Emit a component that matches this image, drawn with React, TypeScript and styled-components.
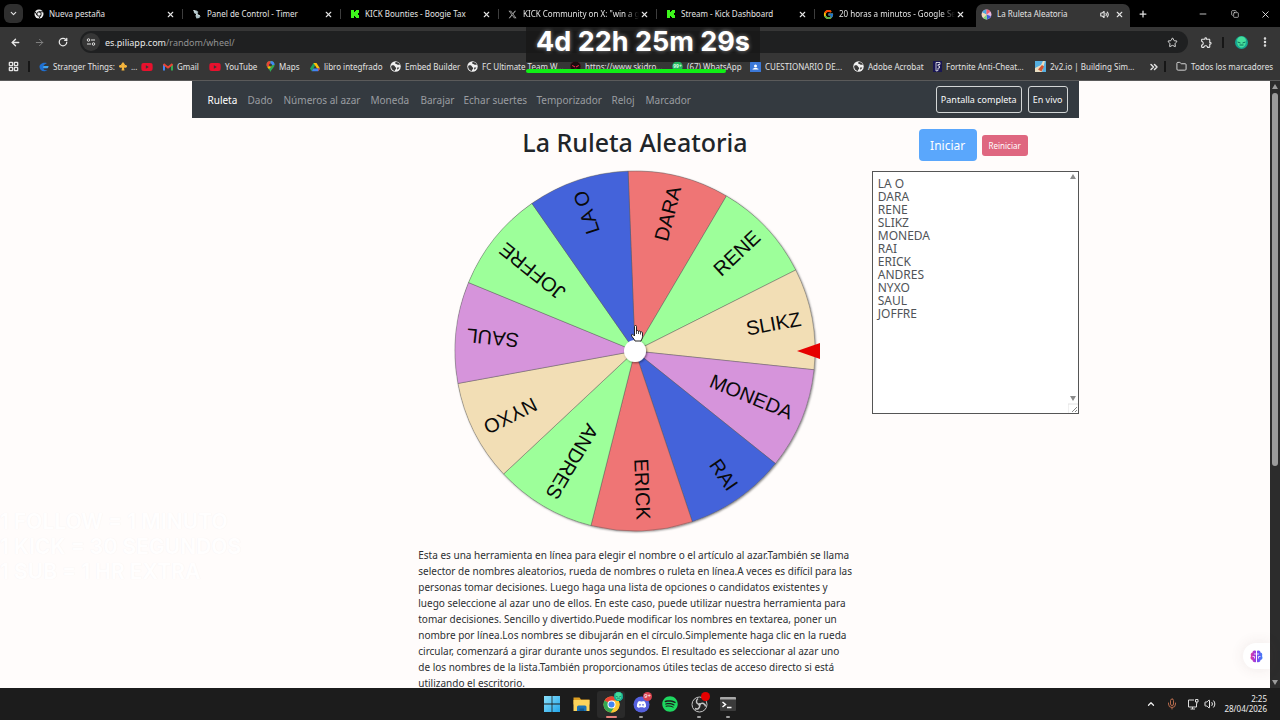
import React from "react";
import styled, { createGlobalStyle } from "styled-components";
import {
  ArrowLeft, ArrowRight, RotateCw, Star, Volume2, Plus, Minus, X, Copy,
  ChevronDown, ChevronUp, ChevronsRight, Folder, EllipsisVertical, Mic, LayoutGrid,
} from "lucide-react";
import { FcGoogle } from "react-icons/fc";
import { FaDiscord, FaSpotify, FaXTwitter, FaYoutube } from "react-icons/fa6";
import { MdOutlineExtension } from "react-icons/md";

const Global = createGlobalStyle`
  *, *::before, *::after { box-sizing: border-box; }
  html, body { margin: 0; height: 100%; overflow: hidden; }
  #root { height: 100%; }
  body { font-family: "Noto Sans", "Open Sans", sans-serif; background: #fffcfb; color: #212529; }
  button, textarea, input { font-family: inherit; }
  button { border: 0; padding: 0; background: none; color: inherit; }
  svg { display: block; flex: none; }
`;

/* ---------- browser frame ---------- */

const Screen = styled.div`
  display: flex;
  flex-direction: column;
  height: 100vh;
  position: relative;
`;

const TabStrip = styled.div`
  display: flex;
  height: 27px;
  padding-left: 4px;
  background: #000;
  color: #e4e4e4;
`;

const TabSearch = styled.button`
  display: grid;
  place-items: center;
  width: 19px;
  height: 19px;
  margin: 4px 2px 0 0;
  border-radius: 6px;
  background: #2f2f2f;
`;

const Tab = styled.div<{ $active?: boolean; $divider?: boolean }>`
  display: flex;
  align-items: center;
  gap: 5px;
  flex: 0 1 ${(p) => (p.$active ? 154 : 158)}px;
  min-width: 0;
  height: ${(p) => (p.$active ? "23px" : "20px")};
  margin-top: 4px;
  margin-left: ${(p) => (p.$active ? 3 : 0)}px;
  padding: ${(p) => (p.$active ? "0 6px 3px 5px" : "0 8px 0 8px")};
  border-radius: 7px 7px 0 0;
  background: ${(p) => (p.$active ? "#363636" : "transparent")};
  position: relative;
  &::after {
    content: "";
    display: ${(p) => (p.$divider ? "block" : "none")};
    position: absolute;
    right: 0;
    top: 5px;
    width: 1px;
    height: 10px;
    background: #3d3d3d;
  }
`;

const TabIcon = styled.span`
  display: grid;
  place-items: center;
  flex: none;
  width: 11px;
`;

const TabTitle = styled.span<{ $fade?: boolean }>`
  flex: 1;
  min-width: 0;
  margin-right: -5px;
  overflow: hidden;
  white-space: nowrap;
  font-size: 8px;
  line-height: 12px;
  ${(p) => p.$fade && "mask-image: linear-gradient(90deg, #000 88%, transparent);"}
`;

const IconButton = styled.button<{ $w?: number }>`
  display: grid;
  place-items: center;
  flex: none;
  width: ${(p) => p.$w ?? 16}px;
  height: 20px;
`;

const NewTab = styled(IconButton)`
  margin: 4px 0 0 3px;
`;

const CloseButton = styled.button`
  display: grid;
  place-items: center;
  flex: none;
  width: 10px;
  height: 10px;
`;

const WindowControls = styled.div`
  display: flex;
  margin-left: auto;
  padding-top: 4px;
`;

const Toolbar = styled.div`
  display: flex;
  align-items: center;
  height: 27px;
  padding: 3px 8px 0 3px;
  background: #363636;
  color: #e8e8e8;
`;

const Address = styled.div`
  display: flex;
  align-items: center;
  flex: 1;
  height: 22px;
  margin: 0 2px 0 5px;
  padding: 0 10px 0 2px;
  border-radius: 11px;
  background: #1f2021;
`;

const SiteInfo = styled.button`
  display: grid;
  place-items: center;
  width: 18px;
  height: 18px;
  border-radius: 9px;
  background: #363636;
`;

const UrlText = styled.span`
  flex: 1;
  margin-left: 5px;
  font-size: 9px;
  color: #e8e8e8;
  span { color: #929292; }
`;

const ToolDivider = styled.span`
  width: 2px;
  height: 11px;
  background: #161616;
`;

const BookmarkBar = styled.nav`
  display: flex;
  align-items: center;
  height: 27px;
  padding: 0 7px 1px 8px;
  border-bottom: 1px solid #5a5a5a;
  background: #363636;
  color: #e2e2e2;
`;

const Bookmark = styled.a<{ $w: number }>`
  display: flex;
  align-items: center;
  gap: 4px;
  flex: 0 0 ${(p) => p.$w}px;
  font-size: 8px;
  line-height: 12px;
  white-space: nowrap;
  color: inherit;
  text-decoration: none;
`;

const AllBookmarks = styled(Bookmark)`
  margin-left: 10px;
`;

const Spacer = styled.span`
  flex: 1;
`;

/* ---------- stream overlays ---------- */

const Countdown = styled.div`
  position: absolute;
  top: 27px;
  left: 50%;
  width: 234px;
  height: 46px;
  margin-left: -114px;
  z-index: 2;
`;

const CountdownText = styled.div`
  height: 35px;
  padding-left: 10px;
  background: rgba(24, 24, 24, 0.8);
  color: #fff;
  font: 700 27px/29px Inter, sans-serif;
  white-space: nowrap;
  text-shadow: 0 0 4px rgba(255, 255, 255, 0.5);
`;

const CountdownBar = styled.div`
  width: 200px;
  height: 4px;
  margin-top: 7px;
  border-radius: 2px;
  background: #10f015;
`;

const StreamRules = styled.div`
  position: absolute;
  left: 0;
  top: 509px;
  color: #fffefe;
  font: 700 21px/25px Inter, sans-serif;
  white-space: pre;
  text-shadow: 0 0 1px #f3efef;
`;

/* ---------- web page ---------- */

const Viewport = styled.div`
  display: flex;
  flex: 1;
  min-height: 0;
`;

const Page = styled.div`
  flex: 1;
  min-width: 0;
  overflow: hidden;
  background: #fffcfb;
`;

const Container = styled.div`
  max-width: 887px;
  margin: 0 auto;
`;

const NavBar = styled.nav`
  display: flex;
  align-items: center;
  gap: 11px;
  height: 37px;
  padding: 0 11px 0 16px;
  background: #343a40;
`;

const NavLink = styled.a<{ $active?: boolean; $w: number }>`
  width: ${(p) => p.$w}px;
  font-size: 10px;
  white-space: nowrap;
  color: ${(p) => (p.$active ? "#fff" : "#9a9da0")};
  text-decoration: none;
`;

const NavButtons = styled.div`
  display: flex;
  gap: 6px;
  margin-left: auto;
`;

const OutlineButton = styled.button`
  height: 27px;
  padding: 0 4px;
  border: 1px solid #d3d6d6;
  border-radius: 3px;
  color: #f8f9fa;
  font-size: 9px;
`;

const Columns = styled.main`
  display: grid;
  grid-template-columns: 1fr 2fr 1fr;
`;

const Center = styled.section`
  grid-column: 2;
  display: flex;
  flex-direction: column;
  align-items: center;
`;

const Title = styled.h1`
  margin: 8px 0 0;
  font-size: 25px;
  line-height: 33px;
  font-weight: 500;
  white-space: nowrap;
`;

const WheelSvg = styled.svg`
  width: 374px;
  height: 370px;
  margin-top: 8px;
`;

const About = styled.p`
  align-self: stretch;
  margin: 10px 0 0;
  padding-left: 5px;
  color: #2c2f32;
  font-size: 10px;
  line-height: 16px;
  white-space: nowrap;
`;

const Side = styled.section`
  display: flex;
  flex-direction: column;
  padding: 11px 0 0 15px;
`;

const Actions = styled.div`
  display: flex;
  align-items: center;
  justify-content: center;
  gap: 5px;
  height: 32px;
  margin-right: 4px;
`;

const ActionButton = styled.button<{ $large?: boolean }>`
  width: ${(p) => (p.$large ? 58 : 46)}px;
  height: ${(p) => (p.$large ? 32 : 21)}px;
  border-radius: ${(p) => (p.$large ? 4 : 3)}px;
  background: ${(p) => (p.$large ? "#5aa7fc" : "#df6780")};
  color: #fff;
  font-size: ${(p) => (p.$large ? 12 : 8)}px;
`;

const NamesBox = styled.div`
  position: relative;
  margin-top: 10px;
`;

const Names = styled.textarea`
  display: block;
  width: 100%;
  height: 243px;
  padding: 5px;
  border: 1px solid #555;
  border-radius: 0;
  outline: 0;
  resize: none;
  overflow: hidden;
  background: #fff;
  color: #505458;
  font-size: 12px;
  line-height: 13px;
`;

const NamesRail = styled.div`
  position: absolute;
  top: 3px;
  right: 1px;
  bottom: 1px;
  width: 10px;
  display: flex;
  flex-direction: column;
  align-items: center;
`;

const ScrollRail = styled.div`
  display: flex;
  flex-direction: column;
  align-items: center;
  width: 10px;
  padding: 3px 0;
  background: #2c2c2c;
`;

const Thumb = styled.div`
  width: 6px;
  height: 62%;
  margin-top: 4px;
  border-radius: 3px;
  background: #9b9b9b;
`;

const Assistant = styled.button`
  position: absolute;
  right: 10px;
  top: 643px;
  display: flex;
  align-items: center;
  width: 27px;
  height: 26px;
  padding-left: 7px;
  border-radius: 13px 0 0 13px;
  background: #fff;
  box-shadow: 0 0 14px rgba(90, 60, 60, 0.1);
`;

const Hand = styled.svg`
  position: absolute;
  left: 50%;
  top: 325px;
  margin-left: -9px;
`;

/* ---------- taskbar ---------- */

const Taskbar = styled.footer`
  display: grid;
  grid-template-columns: 1fr auto 1fr;
  align-items: center;
  height: 32px;
  background: #1c1c1c;
  color: #eee;
`;

const Dock = styled.div`
  display: flex;
  grid-column: 2;
  gap: 3px;
`;

const DockItem = styled.button<{ $active?: boolean; $running?: boolean }>`
  position: relative;
  display: grid;
  place-items: center;
  width: ${(p) => (p.$active ? 28 : 26)}px;
  height: 27px;
  border-radius: 3px;
  background: ${(p) => (p.$active ? "#2a2a2a" : "transparent")};
  &::after {
    content: "";
    display: ${(p) => (p.$active || p.$running ? "block" : "none")};
    position: absolute;
    bottom: 0;
    width: ${(p) => (p.$active ? 11 : 4)}px;
    height: 2px;
    border-radius: 1px;
    background: ${(p) => (p.$active ? "#e8837c" : "#a0a0a0")};
  }
`;

const Badge = styled.span<{ $color: string }>`
  position: absolute;
  top: 1px;
  right: 2px;
  width: 9px;
  height: 9px;
  border-radius: 5px;
  background: ${(p) => p.$color};
  color: #fff;
  font-size: 6px;
  line-height: 9px;
`;

const Tray = styled.div`
  display: flex;
  align-items: center;
  justify-content: flex-end;
  padding-right: 13px;
`;

const Clock = styled.time`
  width: 45px;
  margin-left: 6px;
  font-size: 8px;
  line-height: 10px;
  text-align: right;
  white-space: nowrap;
`;

/* ---------- small drawings ---------- */

const ChromeMono = () => (
  <svg width="10" height="10" viewBox="0 0 20 20">
    <circle cx="10" cy="10" r="9" fill="#eee" />
    <circle cx="10" cy="10" r="4.4" fill="#eee" stroke="#000" strokeWidth="1.8" />
    <path d="M10 5.6H18M6.2 12.2L2.2 5.6M13.8 12.2L9.8 19" stroke="#000" strokeWidth="1.8" />
  </svg>
);

const TimerMark = () => (
  <svg width="10" height="10" viewBox="0 0 20 20">
    <path d="M3 2l6 1 4 3-3 3 6 4-1 5-6 1-2-5 2-3-5-3z" fill="#a9bfc4" />
    <path d="M3 2l5 5M11 9l-3 4M13 12l3 3" stroke="#eaf4f4" strokeWidth="2" />
  </svg>
);

const KickMark = () => (
  <svg width="10" height="10" viewBox="0 0 10 10">
    <path fill="#3df51c" d="M1 1h3v2h1V2h1V1h3v3H8v1H7h1v1h1v3H6V8H5V7H4v2H1z" />
  </svg>
);

const PieMark = () => (
  <svg width="11" height="11" viewBox="0 0 20 20">
    <circle cx="10" cy="10" r="9" fill="#e9b9e0" />
    <path d="M10 10L2 6A9 9 0 0 1 10 1z" fill="#4ba9dc" />
    <path d="M10 10V1a9 9 0 0 1 7 4z" fill="#ef5f6c" />
    <path d="M10 10l8 3a9 9 0 0 1-7 6z" fill="#3f5bd8" />
    <path d="M10 10l1 9a9 9 0 0 1-7-3z" fill="#7ed67b" />
    <path d="M10 10l-6 6a9 9 0 0 1-2-9z" fill="#f3dfb3" />
  </svg>
);

const CrescentMark = () => (
  <svg width="10" height="10" viewBox="0 0 20 20">
    <path d="M16 2C8 0 1 4 1 10s7 11 16 7c-5 0-8-2-8-4h8l2-5H9c1-3 4-4 7-6z" fill="#1f6fd0" />
    <path d="M9 8h10l-1 4H8z" fill="#43a5ee" />
  </svg>
);

const Ornament = () => (
  <svg width="8" height="9" viewBox="0 0 16 18">
    <path d="M8 0l4 5-1 2c3-2 5 0 5 2s-2 3-5 2l-1 1 1 5H5l1-5-1-1c-3 1-5 0-5-2s2-4 5-2L4 5z" fill="#f5b53c" />
  </svg>
);

const GmailMark = () => (
  <svg width="10" height="10" viewBox="0 0 20 20">
    <path d="M2 17V5" stroke="#4285f4" strokeWidth="4" />
    <path d="M18 17V5" stroke="#34a853" strokeWidth="4" />
    <path d="M1 4l9 7 9-7" fill="none" stroke="#ea4335" strokeWidth="4" />
  </svg>
);

const MapsMark = () => (
  <svg width="9" height="11" viewBox="0 0 18 22">
    <path d="M9 22C7 16 1 13 1 8a8 8 0 0 1 16 0c0 5-6 8-8 14z" fill="#34a853" />
    <path d="M1 8a8 8 0 0 1 8-8v8L3 13z" fill="#ea4335" />
    <path d="M9 0a8 8 0 0 1 8 8H9z" fill="#4285f4" />
    <path d="M3 13l5-5 3 3-5 5z" fill="#fbbc04" />
    <circle cx="9" cy="8" r="3" fill="#363636" />
  </svg>
);

const DriveMark = () => (
  <svg width="10" height="10" viewBox="0 0 20 18">
    <path d="M7 1h6L6.500 12.500 3.500 17.500 0 12z" fill="#1ea362" />
    <path d="M7 1h6l7 11h-6z" fill="#ffc107" />
    <path d="M6.500 12H20l-3.500 5.500h-13z" fill="#4285f4" />
    <path d="M16 12h4l-3.500 5.500z" fill="#ea4335" />
  </svg>
);

const GlobeMark = () => (
  <svg width="11" height="11" viewBox="0 0 20 20">
    <circle cx="10" cy="10" r="9.500" fill="#f1f1f1" />
    <path d="M3 8c3-1 5 0 6 2s3 2 2 4-2 1-2 4c-4 0-7-4-7-8zM9 3c1 3 3 2 5 4l4 0c-1-3-4-5-7-5zM13 12l4 0c-1 2-2 3-4 4z" fill="#3a3a3a" />
  </svg>
);

const SkullMark = () => (
  <svg width="11" height="11" viewBox="0 0 20 20">
    <circle cx="10" cy="10" r="9.500" fill="#1a0b0e" stroke="#571925" />
    <path d="M4 8l5 3M16 8l-5 3M8 15h4" stroke="#df2843" strokeWidth="2" />
  </svg>
);

const WhatsAppMark = () => (
  <svg width="11" height="11" viewBox="0 0 22 22">
    <circle cx="11" cy="11" r="10.500" fill="#25b45e" />
    <text x="11" y="14" textAnchor="middle" fontSize="10" fontWeight="700" fill="#d9ffe6">99+</text>
  </svg>
);

const ClassMark = () => (
  <svg width="11" height="10" viewBox="0 0 22 20">
    <rect width="22" height="20" rx="1" fill="#3b78d8" />
    <circle cx="11" cy="8" r="3" fill="#fff" />
    <path d="M5 15c0-4 12-4 12 0z" fill="#fff" />
  </svg>
);

const FortMark = () => (
  <svg width="9" height="11" viewBox="0 0 18 22">
    <rect width="18" height="22" fill="#191653" />
    <path d="M6 3h8v4h-4v3h3v4h-3v5l-4 1z" fill="none" stroke="#fff" strokeWidth="1.500" />
  </svg>
);

const GameMark = () => (
  <svg width="11" height="11" viewBox="0 0 22 22">
    <rect width="22" height="22" fill="#55aee0" />
    <path d="M0 22V14L12 8l4-8h4l-6 22z" fill="#e9ddc0" />
    <path d="M6 17l8-9 4 3-5 10z" fill="#d4552e" />
  </svg>
);

const Avatar = ({ size = 13 }: { size?: number }) => (
  <svg width={size} height={size} viewBox="0 0 26 26">
    <circle cx="13" cy="13" r="13" fill="#16a793" />
    <path d="M4 10a9 9 0 0 1 18 0c0 8-4 13-9 13S4 18 4 10z" fill="#45df9b" />
    <path d="M5 12l6 2M21 12l-6 2M9 18h8" stroke="#0d6c5c" strokeWidth="2" />
  </svg>
);

const TuneIcon = () => (
  <svg width="10" height="10" viewBox="0 0 20 20" fill="none" stroke="#e4e4e4" strokeWidth="2">
    <circle cx="5" cy="6" r="2.500" />
    <path d="M10 6h8M2 14h8" />
    <circle cx="15" cy="14" r="2.500" />
  </svg>
);

const Arrow = ({ down, color }: { down?: boolean; color: string }) => (
  <svg width="6" height="5" viewBox="0 0 6 5">
    <path d={down ? "M0 0h6L3 5z" : "M0 5h6L3 0z"} fill={color} />
  </svg>
);

const WindowsMark = () => (
  <svg width="16" height="16" viewBox="0 0 16 16">
    <defs>
      <linearGradient id="win" x1="0" y1="0" x2="1" y2="1">
        <stop offset="0" stopColor="#8be0fb" />
        <stop offset="1" stopColor="#22a6ea" />
      </linearGradient>
    </defs>
    <path d="M0 0h7.600v7.600H0zM8.400 0H16v7.600H8.400zM0 8.400h7.600V16H0zM8.400 8.400H16V16H8.400z" fill="url(#win)" />
  </svg>
);

const ExplorerMark = () => (
  <svg width="17" height="16" viewBox="0 0 34 32">
    <path d="M1 3h12l3 4h17v10H1z" fill="#dd9f22" />
    <path d="M1 8h32v22H1z" fill="#fbd45c" />
    <path d="M8 30V22a3 3 0 0 1 3-3h13a3 3 0 0 1 3 3v8z" fill="#1b72b4" />
    <path d="M13 25h9v5h-9z" fill="#0f5a94" />
  </svg>
);

const ChromeMark = () => (
  <svg width="17" height="17" viewBox="0 0 34 34">
    <circle cx="17" cy="17" r="16" fill="#fcc934" />
    <path d="M17 17L3.100 9A16 16 0 0 1 30.900 9z" fill="#ea4335" />
    <path d="M17 17L3.100 9A16 16 0 0 0 16 33L24 20z" fill="#34a853" />
    <path d="M17 9h13.900A16 16 0 0 1 16 33l8-12z" fill="#fcc934" />
    <circle cx="17" cy="17" r="8" fill="#fff" />
    <circle cx="17" cy="17" r="6" fill="#4285f4" />
  </svg>
);

const DiscordMark = () => (
  <svg width="17" height="17" viewBox="0 0 34 34">
    <circle cx="17" cy="17" r="16" fill="#5560dd" />
    <g transform="translate(7 7)"><FaDiscord size={20} color="#fff" /></g>
  </svg>
);

const ObsMark = () => (
  <svg width="17" height="17" viewBox="0 0 34 34" fill="none" stroke="#c6c6c6" strokeWidth="2">
    <circle cx="17" cy="17" r="15" fill="#252525" />
    <path d="M17 17c-7-1-8-8-3-12M17 17c5-5 12-2 12 4M17 17c2 7-4 11-9 8" strokeWidth="3" />
    <circle cx="17" cy="17" r="2" fill="#c6c6c6" />
  </svg>
);

const TerminalMark = () => (
  <svg width="16" height="14" viewBox="0 0 32 28">
    <rect width="32" height="28" rx="2" fill="#3b3b3b" />
    <path d="M0 2a2 2 0 0 1 2-2h28a2 2 0 0 1 2 2v3H0z" fill="#a8a8a8" />
    <path d="M5 10l6 5-6 5M14 21h9" fill="none" stroke="#fff" strokeWidth="3" />
  </svg>
);

const NetworkIcon = () => (
  <svg width="12" height="12" viewBox="0 0 24 24" fill="none" stroke="#ddd" strokeWidth="2">
    <path d="M14 4H3v14h16v-7M7 22h9M11 18v4" />
    <path d="M17 3h5v5h-5zM19.500 8v4" />
  </svg>
);

const BrainMark = () => (
  <svg width="13" height="13" viewBox="0 0 26 26">
    <defs>
      <linearGradient id="brain" x1="0" x2="1">
        <stop offset="0" stopColor="#e13ba0" />
        <stop offset=".5" stopColor="#8a3df0" />
        <stop offset="1" stopColor="#3b82f6" />
      </linearGradient>
    </defs>
    <path d="M12 2C8 0 5 2 5 5 1 6 1 10 2 12c-2 3-1 7 3 8 0 4 4 5 7 4zM14 2c4-2 7 0 7 3 4 1 4 5 3 7 2 3 1 7-3 8 0 4-4 5-7 4z" fill="url(#brain)" />
    <path d="M12 8H8M5 13h4v4M14 8h4M21 13h-4v4" fill="none" stroke="#fff" strokeWidth="1.500" />
  </svg>
);

/* ---------- wheel ---------- */

const RED = "#ef7575";
const GREEN = "#9dff9a";
const WHEAT = "#f2deb5";
const PLUM = "#d694db";
const BLUE = "#4463da";

const slices = [
  { name: "DARA", color: RED },
  { name: "RENE", color: GREEN },
  { name: "SLIKZ", color: WHEAT },
  { name: "MONEDA", color: PLUM },
  { name: "RAI", color: BLUE },
  { name: "ERICK", color: RED },
  { name: "ANDRES", color: GREEN },
  { name: "NYXO", color: WHEAT },
  { name: "SAUL", color: PLUM },
  { name: "JOFFRE", color: GREEN },
  { name: "LA O", color: BLUE },
];

const START = -92.2;
const STEP = 360 / slices.length;
const R = 180;
const point = (deg: number) => {
  const a = (deg * Math.PI) / 180;
  return `${(R * Math.cos(a)).toFixed(2)} ${(R * Math.sin(a)).toFixed(2)}`;
};

const Wheel = () => (
  <WheelSvg viewBox="-187 -184 374 370" role="img" aria-label="Ruleta">
    <defs>
      <filter id="soft" x="-10%" y="-10%" width="120%" height="120%">
        <feDropShadow dx="1" dy="1" stdDeviation="1" floodOpacity=".5" />
      </filter>
    </defs>
    <circle r={R} fill="#888" filter="url(#soft)" />
    {slices.map((s, i) => {
      const from = START + i * STEP;
      return (
        <path
          key={s.name}
          d={`M0 0L${point(from)}A${R} ${R} 0 0 1 ${point(from + STEP)}Z`}
          fill={s.color}
          stroke="#555"
          strokeWidth=".4"
        />
      );
    })}
    {slices.map((s, i) => (
      <text
        key={s.name}
        x="169"
        y="5"
        textAnchor="end"
        fontFamily="Liberation Sans, Arial, sans-serif"
        fontSize="20"
        fill="#0a0a0a"
        transform={`rotate(${START + (i + 0.5) * STEP})`}
      >
        {s.name}
      </text>
    ))}
    <circle r="11" fill="#fff" filter="url(#soft)" />
    <path d="M162 0L185 -8V8Z" fill="#e60000" />
  </WheelSvg>
);

/* ---------- data ---------- */

const tabs = [
  { icon: <ChromeMono />, title: "Nueva pestaña" },
  { icon: <TimerMark />, title: "Panel de Control - Timer" },
  { icon: <KickMark />, title: "KICK Bounties - Boogie Tax" },
  { icon: <FaXTwitter size={9} color="#aaa" />, title: "KICK Community on X: \"win a g", fade: true },
  { icon: <KickMark />, title: "Stream - Kick Dashboard" },
  { icon: <FcGoogle size={11} />, title: "20 horas a minutos - Google Se", fade: true },
];

const bookmarks = [
  { icon: <CrescentMark />, text: "Stranger Things:", tail: true, w: 102 },
  { icon: <FaYoutube size={12} color="#e8112d" />, text: "", w: 22 },
  { icon: <GmailMark />, text: "Gmail", w: 46 },
  { icon: <FaYoutube size={12} color="#e8112d" />, text: "YouTube", w: 57 },
  { icon: <MapsMark />, text: "Maps", w: 44 },
  { icon: <DriveMark />, text: "libro integfrado", w: 80 },
  { icon: <GlobeMark />, text: "Embed Builder", w: 77 },
  { icon: <GlobeMark />, text: "FC Ultimate Team W...", w: 103 },
  { icon: <SkullMark />, text: "https://www.skidro...", w: 102 },
  { icon: <WhatsAppMark />, text: "(67) WhatsApp", w: 78 },
  { icon: <ClassMark />, text: "CUESTIONARIO DE...", w: 103 },
  { icon: <GlobeMark />, text: "Adobe Acrobat", w: 80 },
  { icon: <FortMark />, text: "Fortnite Anti-Cheat...", w: 102 },
  { icon: <GameMark />, text: "2v2.io | Building Sim...", w: 108 },
];

const navLinks: [string, number][] = [
  ["Ruleta", 29], ["Dado", 25], ["Números al azar", 76], ["Moneda", 39], ["Barajar", 32],
  ["Echar suertes", 62], ["Temporizador", 64], ["Reloj", 23], ["Marcador", 45],
];

const about = [
  "Esta es una herramienta en línea para elegir el nombre o el artículo al azar.También se llama",
  "selector de nombres aleatorios, rueda de nombres o ruleta en línea.A veces es difícil para las",
  "personas tomar decisiones. Luego haga una lista de opciones o candidatos existentes y",
  "luego seleccione al azar uno de ellos. En este caso, puede utilizar nuestra herramienta para",
  "tomar decisiones. Sencillo y divertido.Puede modificar los nombres en textarea, poner un",
  "nombre por línea.Los nombres se dibujarán en el círculo.Simplemente haga clic en la rueda",
  "circular, comenzará a girar durante unos segundos. El resultado es seleccionar al azar uno",
  "de los nombres de la lista.También proporcionamos útiles teclas de acceso directo si está",
  "utilizando el escritorio.",
];

const names = "LA O\nDARA\nRENE\nSLIKZ\nMONEDA\nRAI\nERICK\nANDRES\nNYXO\nSAUL\nJOFFRE";

export default function App() {
  return (
    <Screen>
      <Global />
      <TabStrip>
        <TabSearch aria-label="Buscar pestañas"><ChevronDown size={9} strokeWidth={3} /></TabSearch>
        {tabs.map((t, i) => (
          <Tab key={t.title} $divider={i < tabs.length - 1}>
            <TabIcon>{t.icon}</TabIcon>
            <TabTitle $fade={t.fade}>{t.title}</TabTitle>
            <CloseButton aria-label="Cerrar"><X size={9} strokeWidth={3} /></CloseButton>
          </Tab>
        ))}
        <Tab $active>
          <TabIcon><PieMark /></TabIcon>
          <TabTitle>La Ruleta Aleatoria</TabTitle>
          <Volume2 size={9} strokeWidth={3} />
          <CloseButton aria-label="Cerrar"><X size={9} strokeWidth={3} /></CloseButton>
        </Tab>
        <NewTab $w={20} aria-label="Nueva pestaña"><Plus size={10} strokeWidth={3} /></NewTab>
        <WindowControls>
          <IconButton $w={32} aria-label="Minimizar"><Minus size={10} /></IconButton>
          <IconButton $w={31} aria-label="Restaurar"><Copy size={8} /></IconButton>
          <IconButton $w={30} aria-label="Cerrar ventana"><X size={11} /></IconButton>
        </WindowControls>
      </TabStrip>
      <Toolbar>
        <IconButton $w={24} aria-label="Atrás"><ArrowLeft size={11} strokeWidth={3} /></IconButton>
        <IconButton $w={24} aria-label="Adelante"><ArrowRight size={11} color="#858585" /></IconButton>
        <IconButton $w={24} aria-label="Recargar"><RotateCw size={10} strokeWidth={3} /></IconButton>
        <Address>
          <SiteInfo aria-label="Información del sitio"><TuneIcon /></SiteInfo>
          <UrlText>es.piliapp.com<span>/random/wheel/</span></UrlText>
          <Star size={11} />
        </Address>
        <IconButton $w={32} aria-label="Extensiones"><MdOutlineExtension size={13} /></IconButton>
        <ToolDivider />
        <IconButton $w={34} aria-label="Perfil"><Avatar /></IconButton>
        <IconButton $w={14} aria-label="Menú"><EllipsisVertical size={12} strokeWidth={3} /></IconButton>
      </Toolbar>
      <BookmarkBar>
        <Bookmark href="#" $w={20} aria-label="Aplicaciones"><LayoutGrid size={11} strokeWidth={3} /></Bookmark>
        <Bookmark as="span" $w={11}><ToolDivider /></Bookmark>
        {bookmarks.map((b, i) => (
          <Bookmark key={i} href="#" $w={b.w}>
            {b.icon}
            {b.text && <span>{b.text}</span>}
            {b.tail && <><Ornament /><span>...</span></>}
          </Bookmark>
        ))}
        <Spacer />
        <ChevronsRight size={12} strokeWidth={3} />
        <Spacer />
        <ToolDivider />
        <AllBookmarks href="#" $w={94}><Folder size={11} />Todos los marcadores</AllBookmarks>
      </BookmarkBar>

      <Viewport>
        <Page>
          <Container>
            <NavBar>
              {navLinks.map(([label, w], i) => (
                <NavLink key={label} href="#" $active={i === 0} $w={w}>{label}</NavLink>
              ))}
              <NavButtons>
                <OutlineButton>Pantalla completa</OutlineButton>
                <OutlineButton>En vivo</OutlineButton>
              </NavButtons>
            </NavBar>
            <Columns>
              <Center>
                <Title>La Ruleta Aleatoria</Title>
                <Wheel />
                <About>
                  {about.map((line) => (
                    <React.Fragment key={line}>{line}<br /></React.Fragment>
                  ))}
                </About>
              </Center>
              <Side>
                <Actions>
                  <ActionButton $large>Iniciar</ActionButton>
                  <ActionButton>Reiniciar</ActionButton>
                </Actions>
                <NamesBox>
                  <Names aria-label="Nombres" defaultValue={names} spellCheck={false} />
                  <NamesRail>
                    <Arrow color="#8b8b8b" />
                    <Spacer />
                    <Arrow down color="#8b8b8b" />
                    <svg width="10" height="12" viewBox="0 0 10 12">
                      <path d="M0 12V3H10" fill="none" stroke="#e2e2e2" />
                      <path d="M4 11l5-5M7 11l2-2" stroke="#888" />
                    </svg>
                  </NamesRail>
                </NamesBox>
              </Side>
            </Columns>
          </Container>
        </Page>
        <ScrollRail>
          <Arrow color="#9b9b9b" />
          <Thumb />
          <Spacer />
          <Arrow down color="#9b9b9b" />
        </ScrollRail>
      </Viewport>

      <Taskbar>
        <Dock>
          <DockItem aria-label="Inicio"><WindowsMark /></DockItem>
          <DockItem aria-label="Explorador"><ExplorerMark /></DockItem>
          <DockItem $active aria-label="Chrome">
            <ChromeMark />
            <Badge $color="#24c48f"><Avatar size={9} /></Badge>
          </DockItem>
          <DockItem $running aria-label="Discord">
            <DiscordMark />
            <Badge $color="#d8424f">9+</Badge>
          </DockItem>
          <DockItem aria-label="Spotify"><FaSpotify size={16} color="#1ed760" /></DockItem>
          <DockItem $running aria-label="OBS">
            <ObsMark />
            <Badge $color="#e60000" />
          </DockItem>
          <DockItem $running aria-label="Terminal"><TerminalMark /></DockItem>
        </Dock>
        <Tray>
          <IconButton $w={20} aria-label="Iconos ocultos"><ChevronUp size={10} strokeWidth={3} /></IconButton>
          <IconButton $w={22} aria-label="Micrófono"><Mic size={12} color="#b56a4c" /></IconButton>
          <IconButton $w={20} aria-label="Red"><NetworkIcon /></IconButton>
          <IconButton $w={13} aria-label="Volumen"><Volume2 size={12} /></IconButton>
          <Clock>2:25<br />28/04/2026</Clock>
        </Tray>
      </Taskbar>

      <Countdown>
        <CountdownText>4d 22h 25m 29s</CountdownText>
        <CountdownBar />
      </Countdown>
      <StreamRules>{"1 FOLLOW = 1 MINUTO\n1 KICK = 30 SEGUNDOS\n1 SUB = 1 HR EXTRA"}</StreamRules>
      <Assistant aria-label="Asistente"><BrainMark /></Assistant>
      <Hand width="12" height="17" viewBox="0 0 24 34">
        <path
          d="M7 3c0-3 4-3 4 0v9c1-2 4-1 4 1 1-2 4-1 4 1 2-1 4 0 4 2v7c0 4-2 6-3 9H8c-1-4-7-8-7-12 0-2 3-2 6 2z"
          fill="#fff" stroke="#111" strokeWidth="1.800" strokeLinejoin="round"
        />
        <path d="M11 12v6M15 13v5M19 14v5" stroke="#111" strokeWidth="1.500" />
      </Hand>
    </Screen>
  );
}
